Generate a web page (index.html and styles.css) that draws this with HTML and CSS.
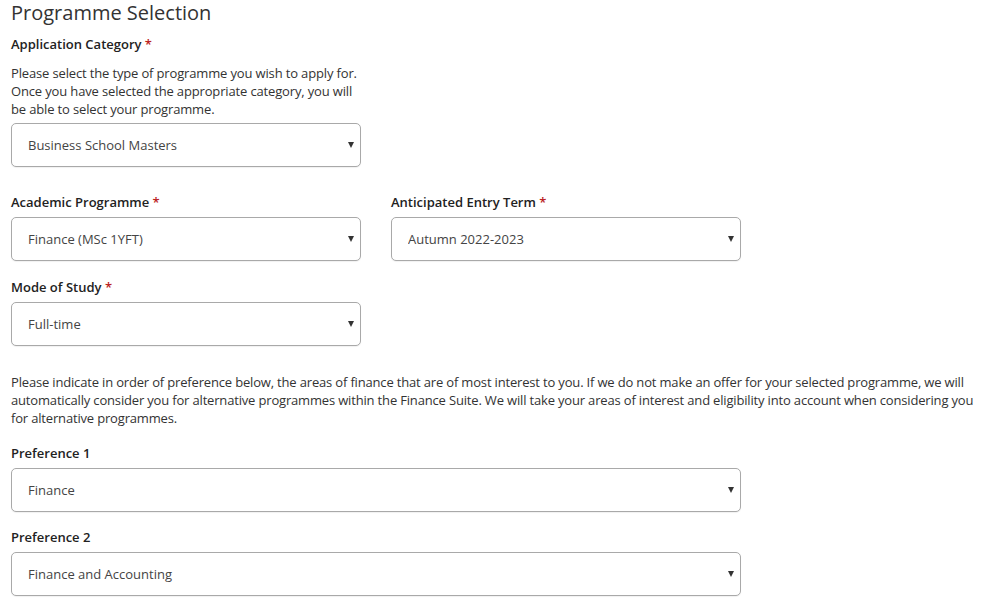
FILE: index.html
```html
<!DOCTYPE html>
<html lang="en">
<head>
  <meta charset="UTF-8" />
  <meta name="viewport" content="width=device-width, initial-scale=1.0" />
  <title>Programme Selection</title>
  <link rel="stylesheet" href="styles.css">
</head>
<body>
  <form class="form">
    <h1>Programme Selection</h1>

    <!-- Categoria -->
    <div class="field field-first">
      <label class="label" for="category">Application Category <span class="req">*</span></label>
      <p class="help">Please select the type of programme you wish to apply for. Once you have selected the appropriate category, you will be able to select your programme.</p>
      <div class="select-wrap">
        <select id="category" class="select">
          <option>Business School Masters</option>
        </select>
      </div>
    </div>

    <div class="row">
      <div class="field">
        <label class="label" for="programme">Academic Programme <span class="req">*</span></label>
        <div class="select-wrap">
          <select id="programme" class="select">
            <option>Finance (MSc 1YFT)</option>
          </select>
        </div>
      </div>
      <div class="field">
        <label class="label" for="term">Anticipated Entry Term <span class="req">*</span></label>
        <div class="select-wrap">
          <select id="term" class="select">
            <option>Autumn 2022-2023</option>
          </select>
        </div>
      </div>
    </div>

    <div class="row">
      <div class="field">
        <label class="label" for="mode">Mode of Study <span class="req">*</span></label>
        <div class="select-wrap">
          <select id="mode" class="select">
            <option>Full-time</option>
          </select>
        </div>
      </div>
    </div>

    <p class="intro">Please indicate in order of preference below, the areas of finance that are of most interest to you. If we do not make an offer for your selected programme, we will automatically consider you for alternative programmes within the Finance Suite. We will take your areas of interest and eligibility into account when considering you for alternative programmes.</p>

    <!-- Preferencias -->
    <div class="field field-wide">
      <label class="label" for="pref1">Preference 1</label>
      <div class="select-wrap">
        <select id="pref1" class="select">
          <option>Finance</option>
        </select>
      </div>
    </div>

    <div class="field field-wide">
      <label class="label" for="pref2">Preference 2</label>
      <div class="select-wrap">
        <select id="pref2" class="select">
          <option>Finance and Accounting</option>
        </select>
      </div>
    </div>
  </form>
</body>
</html>
```

FILE: styles.css
```css
body {
  font-family: "Open Sans", Arial, sans-serif;
  font-size: 13px;
  line-height: 18px;
  color: #333;
  background-color: #fff;
  margin: 0;
  padding: 0 0 0 11px;
}

h1 {
  font-size: 20px;
  font-weight: normal;
  line-height: 26px;
  color: #333;
  margin: 0 0 9px 0;
}

.field {
  width: 350px;
  margin-bottom: 17px;
}

.field-first {
  margin-bottom: 26px;
}

.field-wide {
  width: 730px;
  margin-bottom: 16px;
}

.row {
  display: flex;
  gap: 30px;
}

.label {
  display: block;
  font-weight: 600;
  color: #222;
  margin-bottom: 6px;
}

.req {
  color: #b22;
}

.help {
  margin: 11px 0 5px 0;
  color: #333;
  letter-spacing: -0.15px;
}

.intro {
  width: 976px;
  margin: 10px 0 17px 0;
  color: #333;
  letter-spacing: -0.17px;
}

.select-wrap {
  position: relative;
}

.select-wrap::after {
  content: "";
  position: absolute;
  right: 7px;
  top: 19px;
  border-left: 3px solid transparent;
  border-right: 3px solid transparent;
  border-top: 6px solid #333;
  pointer-events: none;
}

.select {
  -webkit-appearance: none;
  appearance: none;
  display: block;
  width: 100%;
  height: 44px;
  padding: 0 30px 0 16px;
  font-family: "Open Sans", Arial, sans-serif;
  font-size: 13px;
  color: #444;
  background-color: #fff;
  border: 1px solid #a9a9a9;
  border-radius: 5px;
  box-shadow: 0 1px 1px rgba(0, 0, 0, 0.06);
}
```
